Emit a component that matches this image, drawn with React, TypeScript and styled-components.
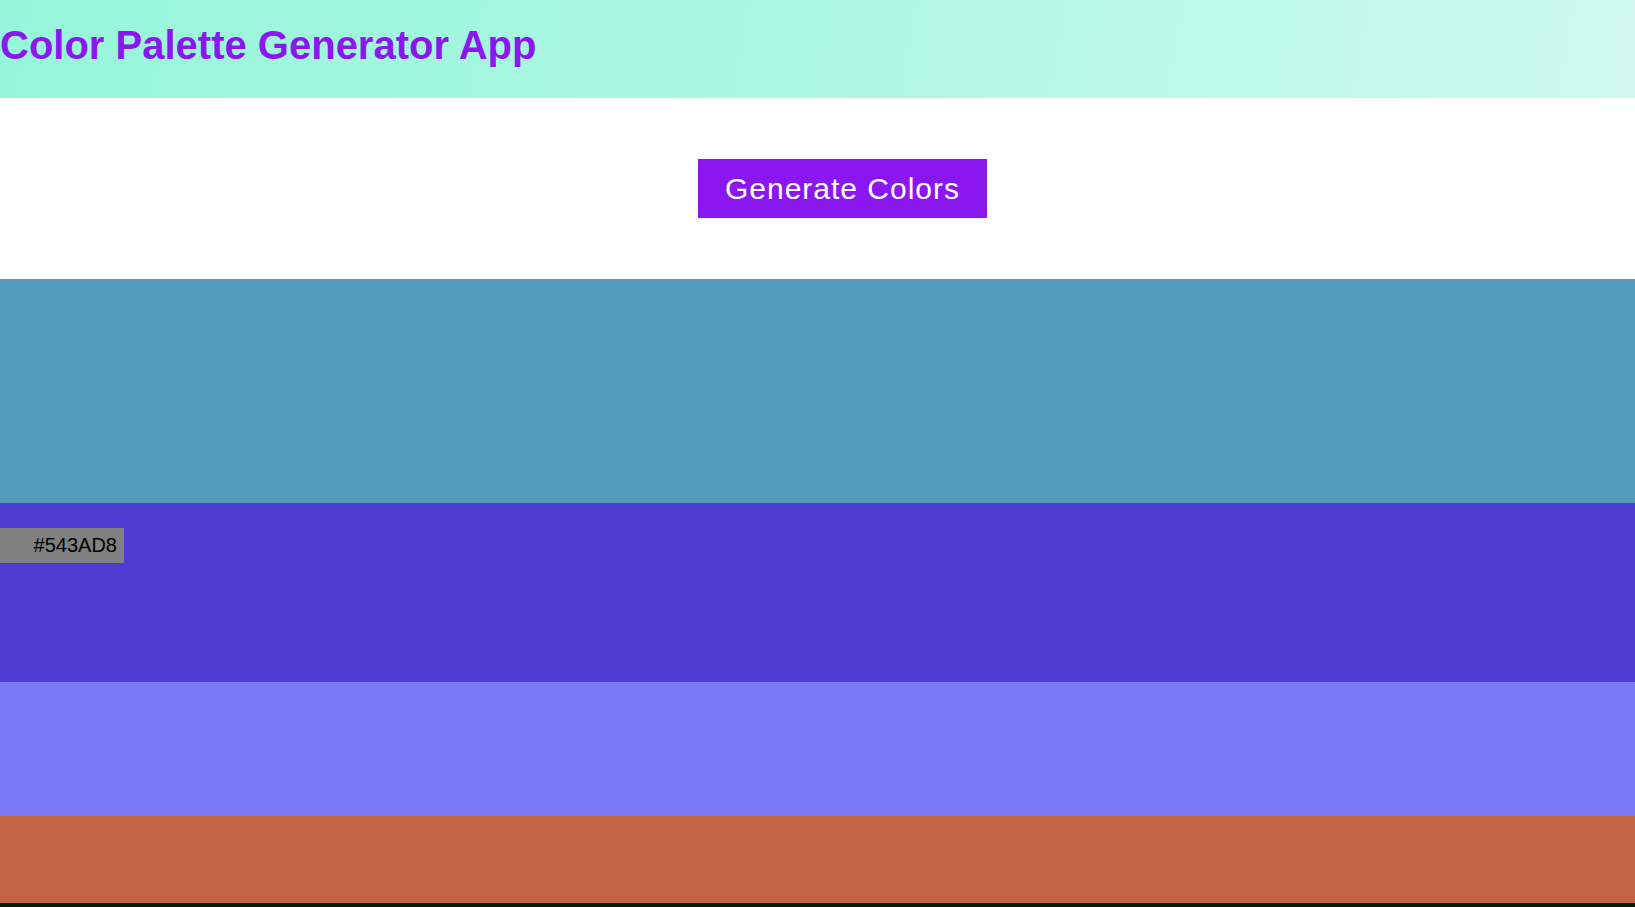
import styled, { createGlobalStyle } from "styled-components";

interface BandProp {
  bg: string;
  h: number;
}

const GlobalStyle = createGlobalStyle`
  html, body {
    margin: 0;
    padding: 0;
    background-color: #111614;
  }
  body {
    font-family: "Liberation Sans", Arial, sans-serif;
  }
`;

const Page = styled.div`
  width: 100%;
  display: flex;
  flex-direction: column;
`;

const Header = styled.header`
  height: 98px;
  display: flex;
  align-items: center;
  background: linear-gradient(100deg, #96f6da 0%, #b0f7e3 55%, #d0f9ee 100%);
`;

const Title = styled.h1`
  margin: 0;
  padding-bottom: 7px;
  font-size: 40px;
  font-weight: 700;
  color: #8b17f0;
`;

const Controls = styled.div`
  height: 181px;
  display: flex;
  align-items: center;
  justify-content: center;
  padding-left: 50px;
  background-color: #ffffff;
`;

const GenerateBtn = styled.button`
  width: 289px;
  height: 59px;
  padding: 0;
  border: none;
  background-color: #8b17f0;
  color: #ffffff;
  font-family: "Liberation Sans", Arial, sans-serif;
  font-size: 30px;
  letter-spacing: 1px;
  cursor: pointer;
`;

const Band = styled.div<BandProp>`
  height: ${(props) => props.h}px;
  background-color: ${(props) => props.bg};
  position: relative;
`;

const HexLabel = styled.div`
  position: absolute;
  top: 25px;
  left: 0;
  width: 124px;
  height: 35px;
  box-sizing: border-box;
  padding-right: 7px;
  display: flex;
  align-items: center;
  justify-content: flex-end;
  background-color: #808080;
  color: #000000;
  font-size: 20px;
`;

const colors = [
  { bg: "#529bba", h: 224 },
  { bg: "#4f3bd2", h: 179, label: "#543AD8" },
  { bg: "#797af5", h: 134 },
  { bg: "#c36447", h: 87 },
];

function App() {
  return (
    <Page>
      <GlobalStyle />
      <Header>
        <Title>Color Palette Generator App</Title>
      </Header>
      <Controls>
        <GenerateBtn>Generate Colors</GenerateBtn>
      </Controls>
      {colors.map((c) => (
        <Band key={c.bg} bg={c.bg} h={c.h}>
          {c.label && <HexLabel>{c.label}</HexLabel>}
        </Band>
      ))}
    </Page>
  );
}

export default App;
